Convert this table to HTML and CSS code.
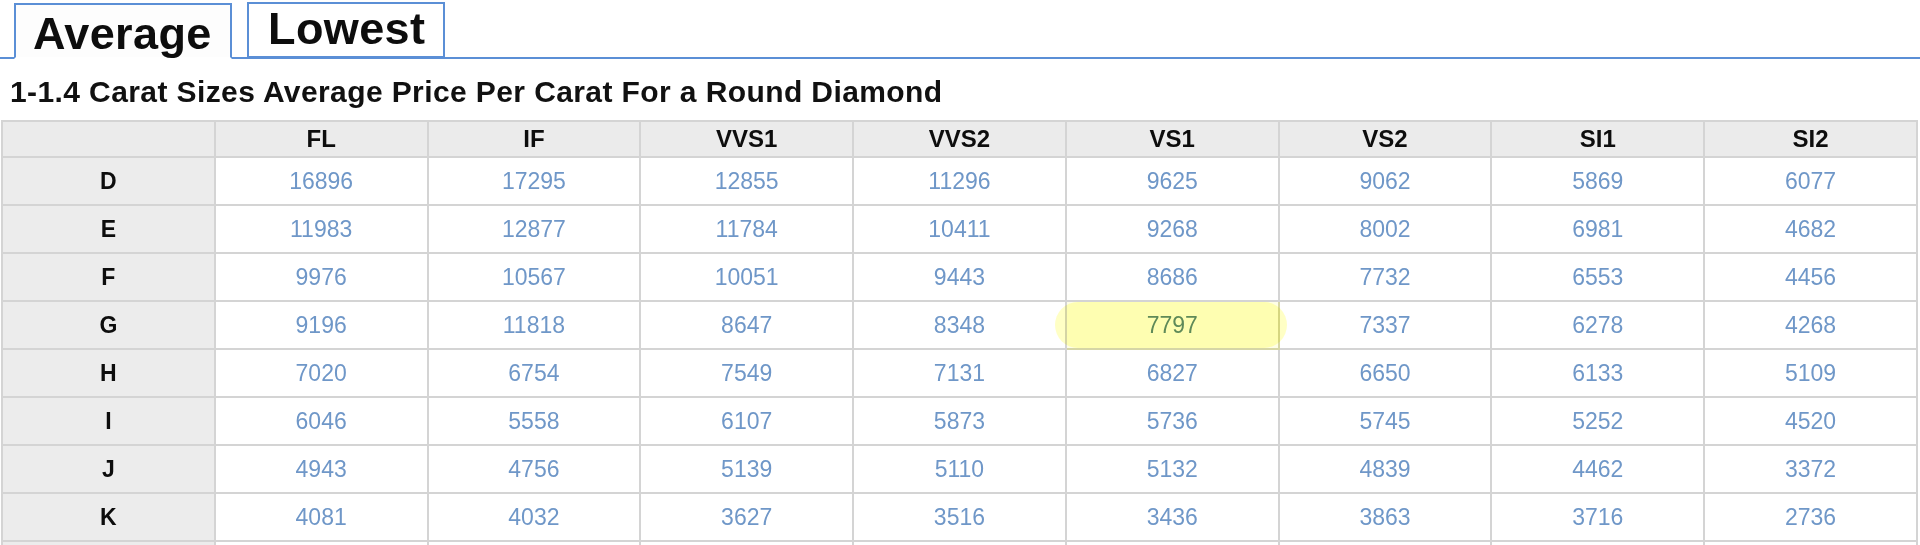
FILE: index.html
```html
<!DOCTYPE html>
<html lang="en">
<head>
<meta charset="utf-8">
<title>Diamond Prices</title>
<link rel="stylesheet" href="styles.css">
</head>
<body>
<div class="tabs">
  <div class="tab active">Average</div>
  <div class="tab">Lowest</div>
</div>
<h2 class="title">1-1.4 Carat Sizes Average Price Per Carat For a Round Diamond</h2>
<table class="grid">
  <thead>
    <tr><th></th><th>FL</th><th>IF</th><th>VVS1</th><th>VVS2</th><th>VS1</th><th>VS2</th><th>SI1</th><th>SI2</th></tr>
  </thead>
  <tbody>
    <tr><th>D</th><td>16896</td><td>17295</td><td>12855</td><td>11296</td><td>9625</td><td>9062</td><td>5869</td><td>6077</td></tr>
    <tr><th>E</th><td>11983</td><td>12877</td><td>11784</td><td>10411</td><td>9268</td><td>8002</td><td>6981</td><td>4682</td></tr>
    <tr><th>F</th><td>9976</td><td>10567</td><td>10051</td><td>9443</td><td>8686</td><td>7732</td><td>6553</td><td>4456</td></tr>
    <tr><th>G</th><td>9196</td><td>11818</td><td>8647</td><td>8348</td><td class="hl">7797</td><td>7337</td><td>6278</td><td>4268</td></tr>
    <tr><th>H</th><td>7020</td><td>6754</td><td>7549</td><td>7131</td><td>6827</td><td>6650</td><td>6133</td><td>5109</td></tr>
    <tr><th>I</th><td>6046</td><td>5558</td><td>6107</td><td>5873</td><td>5736</td><td>5745</td><td>5252</td><td>4520</td></tr>
    <tr><th>J</th><td>4943</td><td>4756</td><td>5139</td><td>5110</td><td>5132</td><td>4839</td><td>4462</td><td>3372</td></tr>
    <tr><th>K</th><td>4081</td><td>4032</td><td>3627</td><td>3516</td><td>3436</td><td>3863</td><td>3716</td><td>2736</td></tr>
    <tr class="spacer"><th></th><td></td><td></td><td></td><td></td><td></td><td></td><td></td><td></td></tr>
  </tbody>
</table>
</body>
</html>
```
FILE: styles.css
```css
html, body {
  margin: 0;
  padding: 0;
  background: #ffffff;
  font-family: "Liberation Sans", Arial, Helvetica, sans-serif;
  color: #0d0d0d;
  overflow: hidden;
}

.tabs {
  display: flex;
  align-items: flex-end;
  gap: 15px;
  height: 57px;
  padding-left: 14px;
  border-bottom: 2px solid #5b8fd6;
}

.tab {
  box-sizing: border-box;
  font-size: 45px;
  letter-spacing: 0.4px;
  font-weight: bold;
  line-height: 50px;
  border: 2px solid #5b8fd6;
  background: #ffffff;
  height: 56px;
}

.tab.active {
  border-bottom: 2px solid #ffffff;
  width: 218px;
  padding: 4px 0 0 17px;
  margin-bottom: -2px;
  background: #fdfdfd;
}

.tab:not(.active) {
  padding: 0 18px 0 19px;
  margin-bottom: -1px;
}

.title {
  margin: 16px 0 0 10px;
  font-size: 30px;
  letter-spacing: 0.4px;
  line-height: 34px;
  font-weight: bold;
  color: #111111;
}

.grid {
  margin: 11px 0 0 1px;
  width: 1917px;
  table-layout: fixed;
  border-collapse: collapse;
  border: 2px solid #d4d4d4;
}

.grid th,
.grid td {
  border: 2px solid #d4d4d4;
  padding: 0;
  text-align: center;
}

.grid thead th {
  height: 34px;
  background: #ebebeb;
  font-size: 24px;
  font-weight: bold;
  color: #0d0d0d;
}

.grid tbody th {
  height: 46px;
  background: #ececec;
  font-size: 23px;
  font-weight: bold;
  color: #0d0d0d;
}

.grid td {
  height: 46px;
  font-size: 23px;
  color: #6f97c8;
  background: #ffffff;
}

.grid td.hl {
  position: relative;
  background: #fefee6;
  color: #5f8a72;
  border-color: #d6d6a6;
}

.grid td.hl::after {
  content: "";
  position: absolute;
  top: 0;
  bottom: 0;
  left: -12px;
  right: -9px;
  border-radius: 24px;
  background: rgba(255, 255, 140, 0.5);
  mix-blend-mode: multiply;
  pointer-events: none;
}
```
